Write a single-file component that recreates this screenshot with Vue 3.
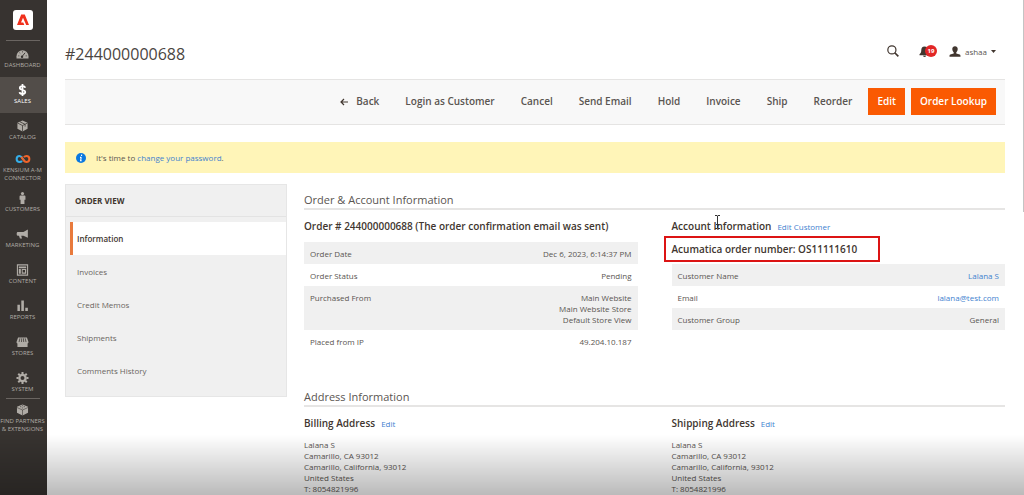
<script setup>
const nav = [
  { id: 'dashboard', lines: ['DASHBOARD'] },
  { id: 'sales', lines: ['SALES'], active: true },
  { id: 'catalog', lines: ['CATALOG'] },
  { id: 'kensium', lines: ['KENSIUM A-M', 'CONNECTOR'], tight: true },
  { id: 'customers', lines: ['CUSTOMERS'] },
  { id: 'marketing', lines: ['MARKETING'] },
  { id: 'content', lines: ['CONTENT'] },
  { id: 'reports', lines: ['REPORTS'] },
  { id: 'stores', lines: ['STORES'] },
  { id: 'system', lines: ['SYSTEM'] },
  { id: 'partners', lines: ['FIND PARTNERS', '& EXTENSIONS'], divided: true, tight: true },
]
const actions = ['Login as Customer', 'Cancel', 'Send Email', 'Hold', 'Invoice', 'Ship', 'Reorder']
const tabs = ['Information', 'Invoices', 'Credit Memos', 'Shipments', 'Comments History']
const orderRows = [
  { label: 'Order Date', lines: ['Dec 6, 2023, 6:14:37 PM'] },
  { label: 'Order Status', lines: ['Pending'] },
  { label: 'Purchased From', lines: ['Main Website', 'Main Website Store', 'Default Store View'] },
  { label: 'Placed from IP', lines: ['49.204.10.187'] },
]
const accountRows = [
  { label: 'Customer Name', value: 'Lalana S', link: true },
  { label: 'Email', value: 'lalana@test.com', link: true },
  { label: 'Customer Group', value: 'General' },
]
const address = ['Lalana S', 'Camarillo, CA 93012', 'Camarillo, California, 93012', 'United States', 'T: 8054821996']
</script>

<template>
  <div class="page">
    <aside class="sidebar">
      <a class="logo" href="#" aria-label="Adobe">
        <svg viewBox="0 0 20 20" width="20" height="20">
          <rect width="20" height="20" rx="3" fill="#fff" />
          <path d="M4 15 8.200 4.500h3.600L16 15h-2.800L10 7.700 8 12.400h2.300l1 2.600z" fill="#f0301c" />
        </svg>
      </a>
      <nav class="menu">
        <a
          v-for="n in nav"
          :key="n.id"
          href="#"
          class="item"
          :class="{ active: n.active, divided: n.divided, tight: n.tight }"
        >
          <svg v-if="n.id === 'dashboard'" class="icon" viewBox="0 0 14 13">
            <path d="M.5 11.500V9a6.500 6.500 0 0 1 13 0v2.500z" fill="currentColor" />
            <path d="m6.300 9.500 3.500-4.300M2.500 8.500h1M3.800 5.200l.7.700M7 3.700v1M11.500 8.500h-1" stroke="#373330" stroke-width="1" />
            <circle cx="6.500" cy="9.500" r="1.300" fill="#373330" />
          </svg>
          <svg v-else-if="n.id === 'sales'" class="icon" viewBox="0 0 14 13">
            <path d="M10 4C9.700 2.800 8.500 2.300 7 2.300c-1.700 0-2.900.8-2.900 2.100C4.100 7.300 10 5.700 10 8.700c0 1.300-1.300 2.100-3 2.100-1.800 0-3-.7-3.200-2M7 0v13" fill="none" stroke="currentColor" stroke-width="1.900" />
          </svg>
          <svg v-else-if="n.id === 'catalog'" class="icon" viewBox="0 0 14 13">
            <path d="m7 .5 5.500 2.600v6.500L7 12.500 1.500 9.600V3.100z" fill="currentColor" />
            <path d="M1.500 3.200 7 6l5.500-2.800M7 6v6.500M4.200 1.900l5.600 2.800v2.500" fill="none" stroke="#373330" stroke-width=".8" />
          </svg>
          <svg v-else-if="n.id === 'kensium'" class="icon wide" viewBox="0 0 16 13">
            <path d="M9.700 8.900 8 6.500C6.800 4.400 6 3.200 4.400 3.200a3.300 3.300 0 0 0 0 6.600c1.100 0 1.900-.5 2.500-1.300" fill="none" stroke="#35aee8" stroke-width="2.200" />
            <path d="M6.300 4.200 8.600 7.800c.9 1.300 1.700 2 3 2a3.300 3.300 0 0 0 0-6.600c-1.100 0-1.900.5-2.600 1.400" fill="none" stroke="#f0642a" stroke-width="2.200" />
          </svg>
          <svg v-else-if="n.id === 'customers'" class="icon" viewBox="0 0 14 13">
            <circle cx="7" cy="1.700" r="1.700" fill="currentColor" />
            <path d="M5 3.800h4c.8 0 1.200.5 1.200 1.200v3.500H9.100V13H4.900V8.500H3.800V5c0-.7.400-1.200 1.200-1.200z" fill="currentColor" />
          </svg>
          <svg v-else-if="n.id === 'marketing'" class="icon" viewBox="0 0 14 13">
            <path d="M12.800 1.500v9L8 8.300H5.600l.9 3.200H4.200l-1-3.200H1.800C1 8.300.7 7.700.7 6.300s.5-2 1.300-2h6z" fill="currentColor" />
          </svg>
          <svg v-else-if="n.id === 'content'" class="icon" viewBox="0 0 14 13">
            <path d="M1.500 1h11v11h-11z" fill="none" stroke="currentColor" stroke-width="1.200" />
            <path d="M3 2.800h8v1.700H3zM3 5.500h2.200v5H3zM6.200 5.500H11v5H6.200z" fill="currentColor" />
            <path d="M7.200 6.500h2.500v2.700H7.200z" fill="#373330" />
          </svg>
          <svg v-else-if="n.id === 'reports'" class="icon" viewBox="0 0 14 13">
            <path d="M1.500 5.200h2.700V12H1.500zM5.700.5h2.800V12H5.700zM10 8.300h2.800V12H10z" fill="currentColor" />
          </svg>
          <svg v-else-if="n.id === 'stores'" class="icon" viewBox="0 0 14 13">
            <path d="M2.200 1.500h9.600l1.700 5c0 .9-.4 1.300-1 1.500V12h-11V8C.9 7.800.5 7.400.5 6.500z" fill="currentColor" />
            <path d="m4.200 2.500-.9 4M6.200 2.500l-.3 4M8 2.500l.3 4M9.900 2.500l.9 4" stroke="#373330" stroke-width=".8" />
          </svg>
          <svg v-else-if="n.id === 'system'" class="icon" viewBox="0 0 14 13">
            <circle cx="7" cy="6.500" r="3.400" fill="none" stroke="currentColor" stroke-width="2.500" />
            <path d="M7 0v2.200M7 10.800V13M.5 6.500h2.200M11.300 6.500h2.200M2.400 1.900 4 3.500M10 9.500l1.600 1.600M11.600 1.900 10 3.500M4 9.500l-1.600 1.600" stroke="currentColor" stroke-width="2.200" />
          </svg>
          <svg v-else class="icon" viewBox="0 0 14 13">
            <path d="m7 .5 6 2.500v6.500l-6 3-6-3V3z" fill="currentColor" />
            <path d="m1 3.800 6 2.700 6-2.700M7 6.500v6" fill="none" stroke="#373330" stroke-width=".6" />
            <path d="M4.300 2.900h1.400M8.300 2.900h1.400M6.300 4.300h1.400M6.300 1.800h1.400" stroke="#373330" stroke-width=".7" />
          </svg>
          <span v-for="l in n.lines" :key="l" class="nav-label">{{ l }}</span>
        </a>
      </nav>
    </aside>

    <main class="main">
      <header class="top">
        <h1>#244000000688</h1>
        <div class="tools">
          <button class="tool" aria-label="Search">
            <svg viewBox="0 0 13 13" width="12" height="12" fill="none" stroke="#41362f">
              <circle cx="5.300" cy="5.300" r="4.400" stroke-width="1.300" />
              <path d="m8.400 8.400 3.900 3.900" stroke-width="1.800" />
            </svg>
          </button>
          <button class="tool bell" aria-label="Notifications">
            <svg viewBox="0 0 11 11" width="11" height="11" fill="#41362f">
              <path d="M5.500.5c2.300 0 3.200 1.600 3.200 3.600 0 2.300.7 3.300 1.800 4.200v.9H.5v-.9c1.100-.9 1.800-1.900 1.800-4.200 0-2 .9-3.600 3.200-3.600zM4 9.700h3c0 .8-.7 1.200-1.500 1.200S4 10.500 4 9.700z" />
            </svg>
            <span class="badge">19</span>
          </button>
          <button class="tool user">
            <svg viewBox="0 0 12 11" width="12" height="11" fill="#41362f">
              <path d="M6 .2c1.900 0 2.800 1.300 2.700 3.100C8.600 4.800 8 5.700 7.300 6.300v1.100l3.400 1.200c.6.200.8.700.8 2.200H.5c0-1.500.2-2 .8-2.200l3.400-1.200V6.300C4 5.700 3.400 4.800 3.300 3.300 3.200 1.500 4.100.2 6 .2z" />
            </svg>
            <span>ashaa</span>
            <svg viewBox="0 0 5 3" width="5" height="3"><path d="M0 0h5L2.500 3z" fill="#41362f" /></svg>
          </button>
        </div>
      </header>

      <div class="actions">
        <button class="plain">
          <svg viewBox="0 0 8 8" width="8" height="8" fill="none" stroke="#41362f" stroke-width="1.200"><path d="M8 4H1M4 1 1 4l3 3" /></svg>
          Back
        </button>
        <button v-for="a in actions" :key="a" class="plain">{{ a }}</button>
        <div class="primary-group">
          <button class="primary">Edit</button>
          <button class="primary">Order Lookup</button>
        </div>
      </div>

      <div class="message">
        <svg viewBox="0 0 10 10" width="10" height="10">
          <circle cx="5" cy="5" r="5" fill="#0a78e0" />
          <path d="M5.700 1.700 5.500 3M5.200 4.200 4.600 8M4 4.400h1.200M4 7.700h1.700" stroke="#fff" stroke-width="1.100" />
        </svg>
        <p>It's time to <a href="#">change your password</a>.</p>
      </div>

      <div class="columns">
        <nav class="tabs">
          <h2>ORDER VIEW</h2>
          <ul>
            <li v-for="(t, i) in tabs" :key="t"><a href="#" :class="{ current: i === 0 }">{{ t }}</a></li>
          </ul>
        </nav>

        <div class="content">
          <section class="block first">
            <h2>Order &amp; Account Information</h2>
            <div class="pair">
              <div>
                <h3>Order # 244000000688 (The order confirmation email was sent)</h3>
                <table>
                  <tbody>
                    <tr v-for="r in orderRows" :key="r.label">
                      <th scope="row">{{ r.label }}</th>
                      <td><div v-for="l in r.lines" :key="l">{{ l }}</div></td>
                    </tr>
                  </tbody>
                </table>
              </div>
              <div>
                <div class="heading">
                  <h3>Account Information</h3>
                  <a href="#">Edit Customer</a>
                  <svg class="cursor" viewBox="0 0 7 14" width="7" height="14" fill="none" stroke="#333"><path d="M1 .5h2l.5.500.5-.5h2M3.500 1v12M1 13.500h2l.5-.5.5.5h2M2 9.500h3" /></svg>
                </div>
                <h3 class="marked">Acumatica order number: OS11111610</h3>
                <table>
                  <tbody>
                    <tr v-for="r in accountRows" :key="r.label">
                      <th scope="row">{{ r.label }}</th>
                      <td><a v-if="r.link" href="#">{{ r.value }}</a><template v-else>{{ r.value }}</template></td>
                    </tr>
                  </tbody>
                </table>
              </div>
            </div>
          </section>

          <section class="block">
            <h2>Address Information</h2>
            <div class="pair">
              <div v-for="kind in ['Billing Address', 'Shipping Address']" :key="kind">
                <div class="heading">
                  <h3>{{ kind }}</h3>
                  <a href="#">Edit</a>
                </div>
                <address><div v-for="l in address" :key="l">{{ l }}</div></address>
              </div>
            </div>
          </section>
        </div>
      </div>
    </main>
    <div class="scrollbar"></div>
    <div class="shade"></div>
  </div>
</template>

<style>
body {
  margin: 0;
  overflow: hidden;
}
</style>

<style scoped>
.page {
  display: flex;
  min-height: 100vh;
  background: #fff;
  color: #5a5551;
  font-family: "Open Sans", "Noto Sans", sans-serif;
  font-size: 8px;
  line-height: 11px;
}
h1, h2, h3, p, ul { margin: 0; padding: 0; font-weight: 400; }
ul { list-style: none; }
a { color: #3f82cf; text-decoration: none; }
button { font: inherit; color: inherit; border: 0; background: none; padding: 0; }
svg { display: block; flex: none; }

.sidebar {
  flex: none;
  width: 47px;
  background: #373330;
}
.logo { display: block; width: 20px; margin: 10px 14px 10px 13px; }
.menu { position: relative; display: flex; flex-direction: column; padding-top: 1px; }
.menu::before,
.divided::before {
  content: "";
  position: absolute;
  top: 0;
  left: 6px;
  right: 7px;
  height: 1px;
  background: #6a6561;
}
.item {
  display: flex;
  flex-direction: column;
  align-items: center;
  height: 36px;
  box-sizing: border-box;
  padding: 7px 2px 0 0;
  color: #b0aca6;
}
.item.active { background: #524d49; color: #fff; }
.item.tight { padding-top: 4px; }
.item.divided { position: relative; height: 42px; margin-top: -3px; padding-top: 6px; }
.icon { width: 13px; height: 12px; margin-bottom: 1px; }
.icon.wide { width: 16px; }
.nav-label { font-size: 6px; line-height: 8px; white-space: nowrap; }

.main { flex: 1; min-width: 0; padding: 0 19px 0 18px; }
.top {
  display: flex;
  justify-content: space-between;
  align-items: flex-start;
  padding: 45px 9px 16px 0;
}
h1 { font-size: 16px; line-height: 18px; color: #4a4541; }
.tools { display: flex; align-items: center; height: 12px; gap: 13px; }
.tool { position: relative; display: flex; align-items: center; }
.bell { width: 17px; margin-left: 7px; }
.badge {
  position: absolute;
  left: 6px;
  top: -1px;
  width: 12px;
  border-radius: 6px;
  background: #e22626;
  color: #fff;
  font-size: 6px;
  font-weight: 700;
  line-height: 12px;
  text-align: center;
}
.user { gap: 4px; }

.actions {
  display: flex;
  justify-content: flex-end;
  align-items: center;
  gap: 26px;
  padding: 8px 9px 9px;
  background: #f8f8f8;
  border-top: 1px solid #e5e4e3;
  border-bottom: 1px solid #e5e4e3;
  font-size: 10px;
  font-weight: 600;
}
.plain { display: flex; align-items: center; gap: 8px; white-space: nowrap; }
.primary-group { display: flex; gap: 6px; margin-left: -10px; }
.primary { height: 27px; padding: 0 9px; background: #fa5a02; color: #fff; white-space: nowrap; }

.message {
  display: flex;
  align-items: center;
  gap: 10px;
  height: 31px;
  margin: 17px 0 11px;
  padding: 0 11px;
  background: #fff5b8;
}

.columns { display: flex; gap: 17px; align-items: flex-start; }
.tabs {
  flex: none;
  width: 220px;
  padding-bottom: 9px;
  background: #f0f0f0;
  border: 1px solid #e6e6e6;
}
.tabs h2 {
  padding: 10px 9px;
  font-size: 8px;
  font-weight: 700;
  color: #41362f;
  border-bottom: 1px solid #e3e3e3;
}
.tabs ul { padding: 5px 0 0 4px; }
.tabs a {
  display: block;
  padding: 11px 4px;
  border-left: 3px solid transparent;
  color: #6a6560;
}
.tabs a.current { background: #fff; border-left-color: #e87a3c; color: #41362f; font-weight: 600; }

.content { flex: 1; min-width: 0; }
.block.first { min-height: 197px; }
.block > h2 {
  padding: 8px 0 1px;
  font-size: 11px;
  line-height: 15px;
  border-bottom: 2px solid #e6e5e4;
}
.pair { display: grid; grid-template-columns: 1fr 1fr; gap: 34px; padding-top: 8px; }
h3 { font-size: 10px; font-weight: 600; line-height: 16px; color: #41362f; white-space: nowrap; }
.heading { position: relative; display: flex; align-items: center; gap: 6px; }
.cursor { position: absolute; left: 42px; top: -3px; }
.marked {
  width: fit-content;
  margin: 2px 0 0 -8px;
  padding: 3px 21px 3px 6px;
  border: 2px solid #dc1414;
}
table { width: 100%; margin-top: 8px; border-collapse: collapse; }
.marked + table { margin-top: 2px; }
tr:nth-child(odd) { background: #f0f0f0; }
th, td { padding: 6px 6px 5px; vertical-align: top; font-weight: 400; text-align: left; }
td { text-align: right; }
address { margin-top: 8px; font-style: normal; }

.scrollbar { position: fixed; right: 0; top: 0; width: 1px; height: 212px; background: #c4c4c4; }
.shade {
  position: fixed;
  left: 0;
  right: 0;
  bottom: 0;
  height: 60px;
  pointer-events: none;
  background: linear-gradient(rgba(0, 0, 0, 0), rgba(0, 0, 0, 0.270));
}
</style>
